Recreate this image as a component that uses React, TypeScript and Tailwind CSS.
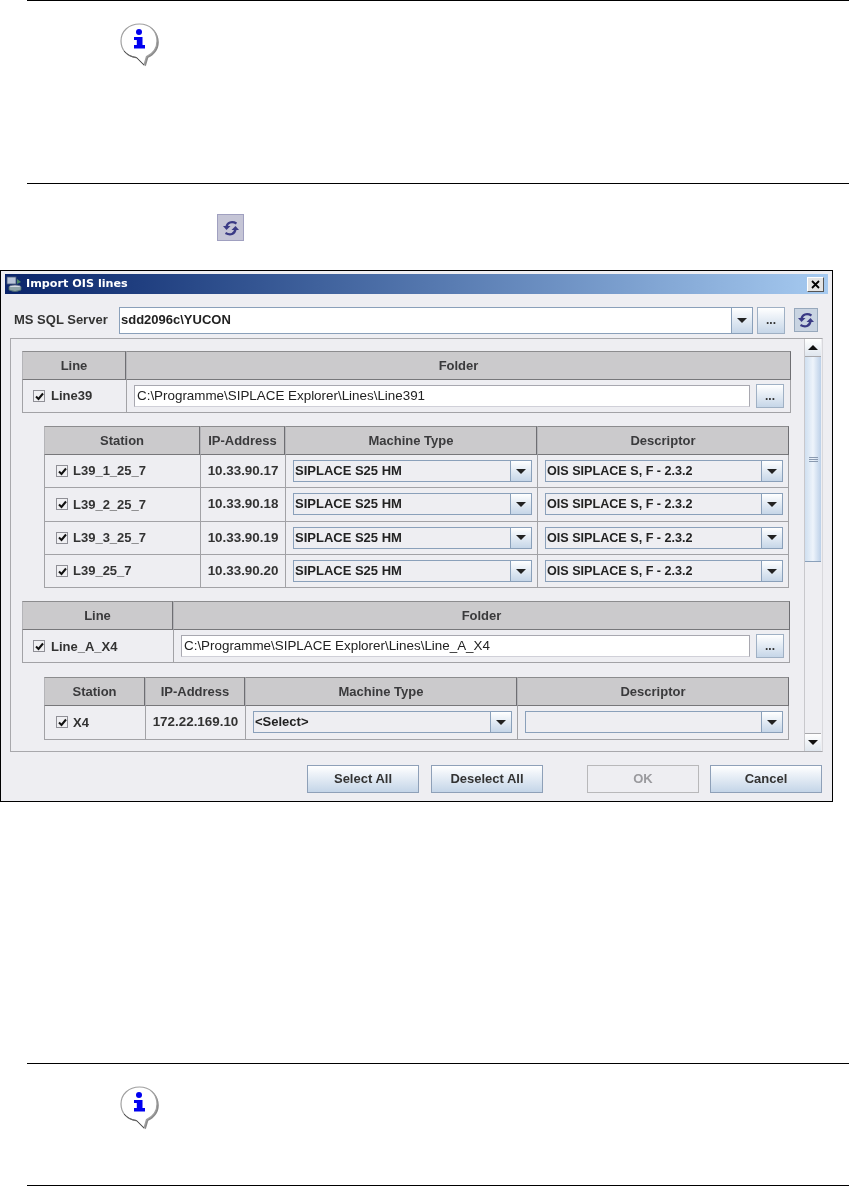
const font = "font-['Liberation_Sans',Arial,sans-serif]";

function InfoIcon() {
  const bubble = "M21.500 3 C32 3 39 10 39 20 C39 28 34 33 28.500 35.500 L26 44 L18.500 36.500 C9 35.500 3 29 3 20 C3 10 11 3 21.500 3 Z";
  return (
    <svg width="44" height="46" viewBox="0 0 44 46" className="block">
      <path d={bubble} fill="#8a8a8a" transform="translate(1.800 1.200)" />
      <path d={bubble} fill="#fff" stroke="#a0a0a0" strokeWidth="1.200" />
      <path d="M6 30 C9 33.500 13 36 18.500 36.500 L26 44" fill="none" stroke="#555" strokeWidth="1" />
      <circle cx="21" cy="11" r="3" fill="#0000f0" />
      <path d="M16 16 H24.500 V24 H27 V27.500 H16 V24 H18.800 V19 H16 Z" fill="#0000f0" />
    </svg>
  );
}

function RefreshGlyph({ size = 18 }: { size?: number }) {
  return (
    <svg width={size} height={size} viewBox="0 0 18 18" className="block">
      <path d="M14.500 4.500 Q11 2.500 8 3.500 Q5 4.500 4.500 8" fill="none" stroke="#3a3a85" strokeWidth="2.300" />
      <path d="M1 7 H8.500 L4.500 11 Z" fill="#3a3a85" />
      <path d="M3.500 14 Q7 16 10 15 Q13 14 13.500 10" fill="none" stroke="#3a3a85" strokeWidth="2.300" />
      <path d="M9.500 11 H17 L13.500 7 Z" fill="#3a3a85" />
    </svg>
  );
}

function TitleIcon() {
  return (
    <svg width="17" height="17" viewBox="0 0 17 17" className="block">
      <rect x="1" y="1" width="9" height="7" fill="#b8c4d8" stroke="#4a5a78" strokeWidth="0.800" />
      <ellipse cx="9" cy="11" rx="6" ry="2" fill="#d4dae4" stroke="#5a6a7a" strokeWidth="0.800" />
      <path d="M3 11 V14 Q9 17 15 14 V11" fill="#8fa4a8" stroke="#4a6a6a" strokeWidth="0.800" />
      <path d="M11 3 L15 6 L11 8 Z" fill="#4f8a68" />
    </svg>
  );
}

function Rule() {
  return <div className="ml-[27px] h-px bg-black shrink-0" />;
}

function Check() {
  return (
    <span className="w-[12px] h-[12px] shrink-0 bg-[#f0f0f3] border border-[#8f8f96] flex items-center justify-center">
      <svg width="9" height="9" viewBox="0 0 9 9" className="block">
        <path d="M1 4.500 L3.500 7 L8 1.500" fill="none" stroke="#111" strokeWidth="2" />
      </svg>
    </span>
  );
}

function Arrow() {
  return <span className="w-0 h-0 border-l-[5.5px] border-r-[5.5px] border-t-[5px] border-l-transparent border-r-transparent border-t-[#222]" />;
}

function DotsButton({ className = "h-[24px]" }: { className?: string }) {
  return (
    <div className={`w-[28px] shrink-0 border border-[#9fb0c4] bg-gradient-to-b from-[#ffffff] to-[#c6d6e8] flex items-center justify-center text-[12px] font-bold text-[#333] leading-none pb-[1px] ${className}`}>
      ...
    </div>
  );
}

function Combo({ text, size }: { text: string; size: string }) {
  return (
    <div className="w-full h-[22px] flex border border-[#8aa0ba] bg-[#eeeef2]">
      <div className={`flex-1 min-w-0 pl-[1px] font-bold text-[#222] leading-[20px] truncate ${size}`}>{text}</div>
      <div className="w-[21px] shrink-0 border-l border-[#8aa0ba] bg-gradient-to-b from-[#ffffff] to-[#c6d6e8] flex items-center justify-center">
        <Arrow />
      </div>
    </div>
  );
}

function HeaderCell({ children }: { children: string }) {
  return (
    <div className="h-full bg-[#cbcacc] border border-t-[#8c8c8e] border-l-[#b4b4b8] border-r-[#6e6e72] border-b-[#77777a] flex items-center justify-center text-[13px] font-bold text-[#3a3a3c]">
      {children}
    </div>
  );
}

function LineTable({ name, folder, columns, pad, className = "" }: { name: string; folder: string; columns: string; pad: string; className?: string }) {
  return (
    <div className={`${columns} ${className}`}>
      <div className="h-[29px]"><HeaderCell>Line</HeaderCell></div>
      <div className="h-[29px]"><HeaderCell>Folder</HeaderCell></div>
      <div className="h-[33px] border-l border-b border-[#a2a2a6] flex items-center pl-[10px] gap-[6px] text-[13px] font-bold text-[#333]">
        <Check />
        <span>{name}</span>
      </div>
      <div className={`h-[33px] border-l border-r border-b border-[#a2a2a6] flex items-center pl-[7px] ${pad}`}>
        <div className="flex-1 min-w-0 h-[22px] bg-white border border-[#a8a8b0] border-b-[#d0d0d8] pl-[2px] text-[13.4px] text-[#222] leading-[20px] mr-[6px] truncate">
          {folder}
        </div>
        <DotsButton />
      </div>
    </div>
  );
}

type Row = { station: string; ip: string; machine: string; descriptor: string };

function StationTable({ rows, columns, className = "" }: { rows: Row[]; columns: string; className?: string }) {
  return (
    <div className={`${columns} ${className}`}>
      {["Station", "IP-Address", "Machine Type", "Descriptor"].map((h) => (
        <div key={h} className="h-[29px]"><HeaderCell>{h}</HeaderCell></div>
      ))}
      {rows.map((r) => (
        <div key={r.station} className="contents">
          <div className="h-[33.33px] border-l border-b border-[#a2a2a6] flex items-center pl-[11px] gap-[5px] text-[13px] font-bold text-[#333]">
            <Check />
            <span>{r.station}</span>
          </div>
          <div className="h-[33.33px] border-l border-b border-[#a2a2a6] flex items-center justify-center text-[13.4px] font-bold text-[#333]">
            {r.ip}
          </div>
          <div className="h-[33.33px] border-l border-b border-[#a2a2a6] flex items-center pl-[7px] pr-[5px]">
            <Combo text={r.machine} size="text-[13px]" />
          </div>
          <div className="h-[33.33px] border-l border-r border-b border-[#a2a2a6] flex items-center pl-[7px] pr-[5px]">
            <Combo text={r.descriptor} size="text-[12.6px]" />
          </div>
        </div>
      ))}
    </div>
  );
}

function DialogButton({ label, disabled = false, className = "" }: { label: string; disabled?: boolean; className?: string }) {
  return (
    <div
      className={`w-[112px] h-[28px] border flex items-center justify-center text-[13px] font-bold ${
        disabled
          ? "border-[#b8b8ba] text-[#9a9a9e] bg-[#eeeef2]"
          : "border-[#8ea0b8] text-[#333] bg-gradient-to-b from-[#ffffff] to-[#c4d5e8]"
      } ${className}`}
    >
      {label}
    </div>
  );
}

function Dialog() {
  const s = "OIS SIPLACE S, F - 2.3.2";
  const m = "SIPLACE S25 HM";
  return (
    <div className="w-[833px] h-[532px] border border-black bg-[#eeeef2] pt-[3px] px-[4px] flex flex-col overflow-hidden shrink-0 blur-[0.35px]">
      <div className="h-[20px] bg-gradient-to-r from-[#0a246a] to-[#a6caf0] flex items-center pl-[1px] pr-[4px] shrink-0">
        <TitleIcon />
        <span className="ml-[3px] text-[11.2px] font-bold text-white font-['DejaVu_Sans',sans-serif] leading-none">Import OIS lines</span>
        <div className="ml-auto w-[17px] h-[15px] bg-[#e4e4e4] border border-t-white border-l-white border-r-[#555] border-b-[#555] flex items-center justify-center">
          <svg width="9" height="9" viewBox="0 0 9 9" className="block">
            <path d="M1 1 L8 8 M8 1 L1 8" stroke="#000" strokeWidth="1.800" />
          </svg>
        </div>
      </div>

      <div className="flex items-center h-[28px] mt-[12px] shrink-0">
        <span className="ml-[9px] w-[105px] text-[13px] font-bold text-[#333] shrink-0">MS SQL Server</span>
        <div className="w-[634px] h-[27px] flex border border-[#8aa0ba] bg-white shrink-0">
          <div className="flex-1 pl-[1px] text-[13px] font-bold text-[#222] leading-[24px]">sdd2096c\YUCON</div>
          <div className="w-[21px] border-l border-[#8aa0ba] bg-gradient-to-b from-[#ffffff] to-[#c6d6e8] flex items-center justify-center">
            <Arrow />
          </div>
        </div>
        <DotsButton className="ml-[4px] h-[27px]" />
        <div className="ml-[9px] w-[24px] h-[24px] bg-[#c9d4e2] border border-[#97a8bc] flex items-center justify-center">
          <RefreshGlyph />
        </div>
      </div>

      <div className="ml-[5px] mt-[4px] w-[813px] h-[414px] border-l border-t border-b border-[#a8a8ac] border-r border-r-[#d8d8dc] flex shrink-0">
        <div className="flex-1 min-w-0 overflow-hidden pt-[12px]">
          <LineTable
            name="Line39"
            folder="C:\Programme\SIPLACE Explorer\Lines\Line391"
            columns="grid grid-cols-[104px_665px]"
            pad="pr-[6px]"
            className="ml-[11px]"
          />
          <StationTable
            className="ml-[33px] mt-[13px]"
            columns="grid grid-cols-[156px_85px_252px_252px]"
            rows={[
              { station: "L39_1_25_7", ip: "10.33.90.17", machine: m, descriptor: s },
              { station: "L39_2_25_7", ip: "10.33.90.18", machine: m, descriptor: s },
              { station: "L39_3_25_7", ip: "10.33.90.19", machine: m, descriptor: s },
              { station: "L39_25_7", ip: "10.33.90.20", machine: m, descriptor: s },
            ]}
          />
          <LineTable
            name="Line_A_X4"
            folder="C:\Programme\SIPLACE Explorer\Lines\Line_A_X4"
            columns="grid grid-cols-[151px_617px]"
            pad="pr-[5px]"
            className="ml-[11px] mt-[13px]"
          />
          <StationTable
            className="ml-[33px] mt-[14px]"
            columns="grid grid-cols-[101px_100px_272px_272px]"
            rows={[{ station: "X4", ip: "172.22.169.10", machine: "<Select>", descriptor: "" }]}
          />
        </div>
        <div className="w-[17px] mr-[1px] flex flex-col shrink-0 border-l border-[#c8c8cc]">
          <div className="h-[18px] shrink-0 bg-gradient-to-b from-[#ffffff] to-[#dfe6ee] flex items-center justify-center border-b border-[#a8a8ac]">
            <span className="w-0 h-0 border-l-[5px] border-r-[5px] border-b-[5px] border-l-transparent border-r-transparent border-b-[#111]" />
          </div>
          <div className="h-[205px] shrink-0 bg-gradient-to-r from-[#cfdff0] via-[#eef4fb] to-[#bcd0e8] border-b border-[#8aa0ba] flex items-center justify-center">
            <div className="w-[9px] h-[5px] border-t border-b border-[#8a9ab0] flex items-center">
              <div className="w-full h-px bg-[#8a9ab0]" />
            </div>
          </div>
          <div className="flex-1" />
          <div className="h-[18px] shrink-0 bg-gradient-to-b from-[#ffffff] to-[#dfe6ee] flex items-center justify-center border-t border-[#a8a8ac]">
            <span className="w-0 h-0 border-l-[5px] border-r-[5px] border-t-[5px] border-l-transparent border-r-transparent border-t-[#111]" />
          </div>
        </div>
      </div>

      <div className="flex mt-[13px] ml-[302px] shrink-0">
        <DialogButton label="Select All" />
        <DialogButton label="Deselect All" className="ml-[12px]" />
        <DialogButton label="OK" disabled className="ml-[44px]" />
        <DialogButton label="Cancel" className="ml-[11px]" />
      </div>
    </div>
  );
}

export default function App() {
  return (
    <div className={`w-[849px] h-[1187px] bg-white overflow-hidden flex flex-col ${font}`}>
      <Rule />
      <div className="ml-[118px] mt-[20px] shrink-0 blur-[0.35px]"><InfoIcon /></div>
      <div className="mt-[116px]"><Rule /></div>
      <div className="ml-[217px] mt-[30px] w-[27px] h-[27px] bg-[#c5c5d6] border border-[#a0a0c0] flex items-center justify-center shrink-0 blur-[0.35px]">
        <RefreshGlyph />
      </div>
      <div className="mt-[29px] shrink-0"><Dialog /></div>
      <div className="mt-[261px]"><Rule /></div>
      <div className="ml-[118px] mt-[20px] shrink-0 blur-[0.35px]"><InfoIcon /></div>
      <div className="mt-[55px]"><Rule /></div>
    </div>
  );
}
